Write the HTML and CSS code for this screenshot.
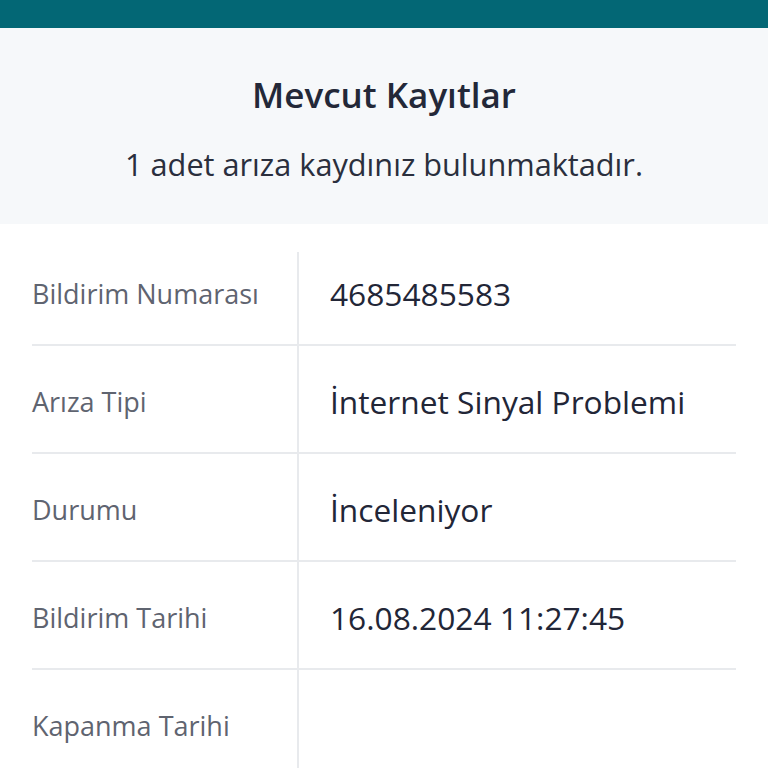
FILE: index.html
```html
<!DOCTYPE html>
<html lang="tr">
<head>
    <meta charset="UTF-8">
    <meta name="viewport" content="width=device-width, initial-scale=1.0">
    <title>Mevcut Kayıtlar</title>
    <link rel="stylesheet" href="styles.css">
</head>
<body>
    <div class="topbar"></div>
    <div class="summary">
        <h1>Mevcut Kayıtlar</h1>
        <p>1 adet arıza kaydınız bulunmaktadır.</p>
    </div>
    <div class="details">
        <div class="row">
            <div class="label">Bildirim Numarası</div>
            <div class="value">4685485583</div>
        </div>
        <div class="row">
            <div class="label">Arıza Tipi</div>
            <div class="value">İnternet Sinyal Problemi</div>
        </div>
        <div class="row">
            <div class="label">Durumu</div>
            <div class="value">İnceleniyor</div>
        </div>
        <div class="row">
            <div class="label">Bildirim Tarihi</div>
            <div class="value">16.08.2024 11:27:45</div>
        </div>
        <div class="row">
            <div class="label">Kapanma Tarihi</div>
            <div class="value"></div>
        </div>
    </div>
</body>
</html>
```

FILE: styles.css
```css
body {
    margin: 0;
    font-family: "Open Sans", "Noto Sans", sans-serif;
    background: #fff;
    color: #232838;
}
.topbar {
    height: 28px;
    background-color: #036775;
}
.summary {
    background-color: #f6f8fa;
    text-align: center;
    padding: 45px 20px 40px;
}
.summary h1 {
    margin: 0;
    font-size: 35px;
    font-weight: 600;
    line-height: 44px;
    color: #232838;
}
.summary p {
    margin: 27px 0 0;
    font-size: 30.7px;
    line-height: 40px;
    color: #2a2f3d;
}
.details {
    margin: 0 32px;
    padding-top: 14px;
}
.row {
    display: flex;
    height: 106px;
    border-bottom: 2px solid #e8eaed;
}
.row:last-child {
    border-bottom: none;
}
.label {
    width: 265px;
    display: flex;
    align-items: center;
    padding-top: 4px;
    font-size: 27px;
    color: #5f6470;
}
.value {
    flex: 1;
    display: flex;
    align-items: center;
    padding: 4px 0 0 31px;
    border-left: 2px solid #e8eaed;
    font-size: 31.7px;
    font-weight: 500;
    color: #222637;
}
.row:first-child .value {
    border-left: none;
    background: linear-gradient(#e8eaed, #e8eaed) no-repeat 0 14px / 2px 100%;
    padding-left: 33px;
}
.row:last-child .value {
    height: 120px;
}
```
